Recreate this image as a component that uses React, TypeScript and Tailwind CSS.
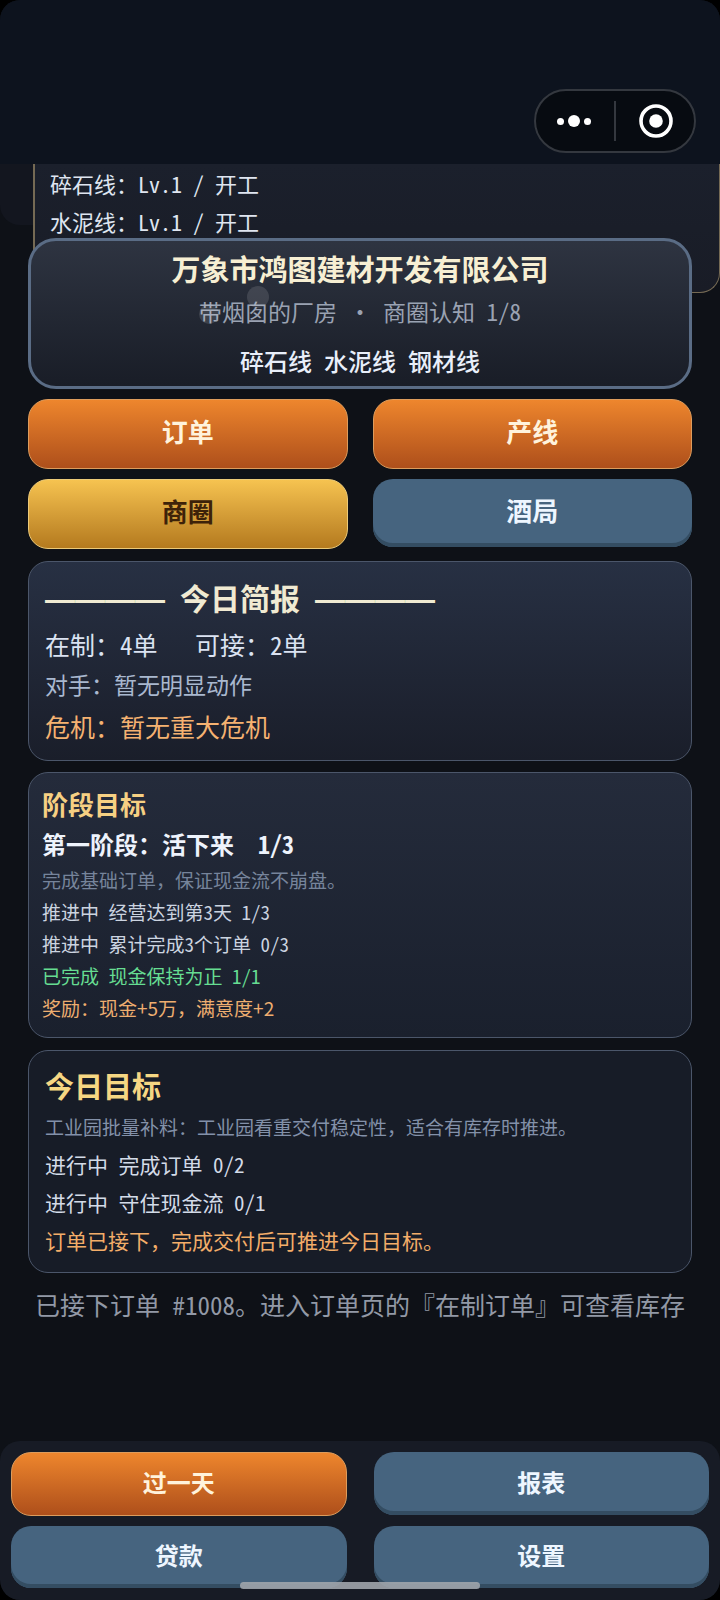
import React from "react";
import clsx from "clsx";

/* ---------- DATA ---------- */

const LINES = [
  { name: "碎石线", level: 1, state: "开工" },
  { name: "水泥线", level: 1, state: "开工" },
];

const STAGE_TASKS = [
  { text: "推进中 经营达到第3天 1/3", done: false },
  { text: "推进中 累计完成3个订单 0/3", done: false },
  { text: "已完成 现金保持为正 1/1", done: true },
];

const DAY_TASKS = ["进行中 完成订单 0/2", "进行中 守住现金流 0/1"];

/* ---------- BUTTONS ---------- */

type Tone = "orange" | "gold" | "blue";

const TONES: Record<Tone, string> = {
  orange: "border border-[#dd9c5c] bg-linear-to-b from-[#ee862d] to-[#ae4f1b] text-[#fff3dc]",
  gold: "border border-[#ecca78] bg-linear-to-b from-[#f6c350] to-[#b47a1e] text-[#3d2209]",
  blue: "bg-[#46647f] text-[#eef6ff] shadow-[inset_0_-4px_0_#344d62]",
};

const GameButton = ({ tone, className, children }: { tone: Tone; className: string; children: React.ReactNode }) => (
  <button type="button" className={clsx("w-full rounded-[20px] font-bold", TONES[tone], className)}>
    {children}
  </button>
);

const Card = ({ className, children }: { className: string; children: React.ReactNode }) => (
  <section className={clsx("rounded-[20px] border border-[#4b566a]", className)}>{children}</section>
);

/* ---------- HEADER ---------- */

const CapsuleMenu = () => (
  <div className="flex h-16 w-[162px] items-center rounded-full border-2 border-[#34383f] bg-[#070b11]">
    <button type="button" aria-label="更多" className="flex flex-1 items-center justify-center gap-1 pr-0.5">
      <span className="size-[7px] rounded-full bg-white" />
      <span className="size-3 rounded-full bg-white" />
      <span className="size-[7px] rounded-full bg-white" />
    </button>
    <span className="h-10 w-0.5 bg-[#34383f]" />
    <button type="button" aria-label="关闭" className="flex flex-1 items-center justify-center pl-0.5">
      <svg viewBox="0 0 34 34" className="size-[34px]">
        <circle cx="17" cy="17" r="15" fill="none" stroke="#fff" strokeWidth="3.6" />
        <circle cx="17" cy="17" r="6.8" fill="#fff" />
      </svg>
    </button>
  </div>
);

/* Liberation's em dashes join into one line */
const Rule = () => <span className="font-['Liberation_Sans',sans-serif] leading-none">————</span>;

/* ---------- PAGE ---------- */

const App = () => {
  return (
    <div className="bg-black">
      <div className="relative flex min-h-screen flex-col overflow-hidden rounded-[20px] bg-[#0e1117] font-['Noto_Sans_CJK_SC',sans-serif] [font-feature-settings:'hwid']">
        <header className="flex h-[164px] shrink-0 items-end justify-end bg-[#0d131e] pr-6 pb-[11px]">
          <CapsuleMenu />
        </header>

        {/* Production lines, scrolled under the header */}
        <div className="h-[61px] rounded-b-[20px] bg-[#13161f]">
          <div className="ml-[33px] h-[129px] rounded-br-[20px] border-r border-b border-l-2 border-[#756a54] bg-linear-to-b from-[#1b202c] to-[#191c26] pl-[15px] text-[22px] leading-[38px] text-[#dfe5f0]">
            {LINES.map((line) => (
              <p key={line.name}>
                {line.name}：Lv.{line.level} / {line.state}
              </p>
            ))}
          </div>
        </div>

        <main className="relative flex flex-col px-7 pt-[13px]">
          <section className="relative rounded-[28px] border-3 border-[#5a6c85] bg-linear-to-b from-[#2e3441] to-[#191d27] pt-[7px] pb-[5px] text-center">
            <h1 className="text-[29px] leading-10 font-bold text-[#f7efd3]">万象市鸿图建材开发有限公司</h1>
            <p className="mt-[3px] text-[23px] leading-10 text-[#9aa2b2]">带烟囱的厂房 · 商圈认知 1/8</p>
            <p className="mt-2.5 text-2xl leading-10 font-medium text-[#e9effa]">碎石线 水泥线 钢材线</p>
            {/* Chimney smoke */}
            <span className="absolute top-[45px] left-[216px] size-[22px] rounded-full bg-white/12" />
            <span className="absolute top-[63px] left-[168px] size-5 rounded-full bg-white/12" />
          </section>

          <nav className="mt-[10px] grid grid-cols-2 gap-x-[25px] gap-y-[10px] text-[26px]">
            <GameButton tone="orange" className="h-[70px] pb-2">订单</GameButton>
            <GameButton tone="orange" className="h-[70px] pb-2">产线</GameButton>
            <GameButton tone="gold" className="h-[70px] pb-2">商圈</GameButton>
            <GameButton tone="blue" className="h-[68px] pb-2">酒局</GameButton>
          </nav>

          <Card className="mt-3 bg-linear-to-b from-[#273043] to-[#1a1e2a] px-4 pt-3.5 pb-3.5">
            <h2 className="text-[30px] leading-[42px] font-bold text-[#f0ead2]">
              <Rule /> 今日简报 <Rule />
            </h2>
            <p className="mt-1.5 text-[25px] leading-10 whitespace-pre text-[#dbe3f2]">在制：4单   可接：2单</p>
            <p className="text-[23px] leading-10 text-[#a9b8cf]">对手：暂无明显动作</p>
            <p className="mt-0.5 text-[25px] leading-10 text-[#f5b271]">危机：暂无重大危机</p>
          </Card>

          <Card className="mt-[11px] bg-linear-to-b from-[#242b3b] to-[#1a202d] px-[13px] pt-[11px] pb-[13px]">
            <h2 className="text-[26px] leading-10 font-bold text-[#f6d083]">阶段目标</h2>
            <p className="text-2xl leading-10 font-bold whitespace-pre text-[#eef3fc]">第一阶段：活下来  1/3</p>
            <div className="text-[19px] leading-8 text-[#ccd4e0]">
              <p className="text-[#76849b] [font-feature-settings:normal]">完成基础订单，保证现金流不崩盘。</p>
              {STAGE_TASKS.map((task) => (
                <p key={task.text} className={clsx(task.done && "text-[#66dd92]")}>
                  {task.text}
                </p>
              ))}
              <p className="text-[#eeae70] [font-feature-settings:normal]">奖励：现金+5万，满意度+2</p>
            </div>
          </Card>

          <Card className="mt-3 bg-[#171c27] px-4 pt-3.5 pb-[13px]">
            <h2 className="text-[29px] leading-10 font-bold text-[#f6d783]">今日目标</h2>
            <p className="mt-1 text-[19px] leading-9 text-[#8391a9] [font-feature-settings:normal]">
              工业园批量补料：工业园看重交付稳定性，适合有库存时推进。
            </p>
            <div className="text-[21px] leading-[38px] text-[#d3dbe8]">
              {DAY_TASKS.map((task) => (
                <p key={task}>{task}</p>
              ))}
              <p className="text-[#f3ad69] [font-feature-settings:normal]">订单已接下，完成交付后可推进今日目标。</p>
            </div>
          </Card>

          <p className="mt-[11px] text-center text-[25px] leading-10 whitespace-nowrap text-[#9299a6]">
            已接下订单 #1008。进入订单页的『在制订单』可查看库存
          </p>
        </main>

        <footer className="mt-auto grid grid-cols-2 gap-x-[27px] gap-y-[10px] rounded-[20px] bg-[#171b25] px-[11px] pt-[11px] pb-3 text-2xl">
          <GameButton tone="orange" className="h-16 pb-1">过一天</GameButton>
          <GameButton tone="blue" className="h-[63px] pb-1">报表</GameButton>
          <GameButton tone="blue" className="h-[62px] pb-1">贷款</GameButton>
          <GameButton tone="blue" className="h-[62px] pb-1">设置</GameButton>
        </footer>

        {/* Home indicator */}
        <div className="absolute bottom-[11px] left-1/2 h-[7px] w-60 -translate-x-1/2 rounded-full bg-[#a0a5ac]/90" />
      </div>
    </div>
  );
};

export default App;
